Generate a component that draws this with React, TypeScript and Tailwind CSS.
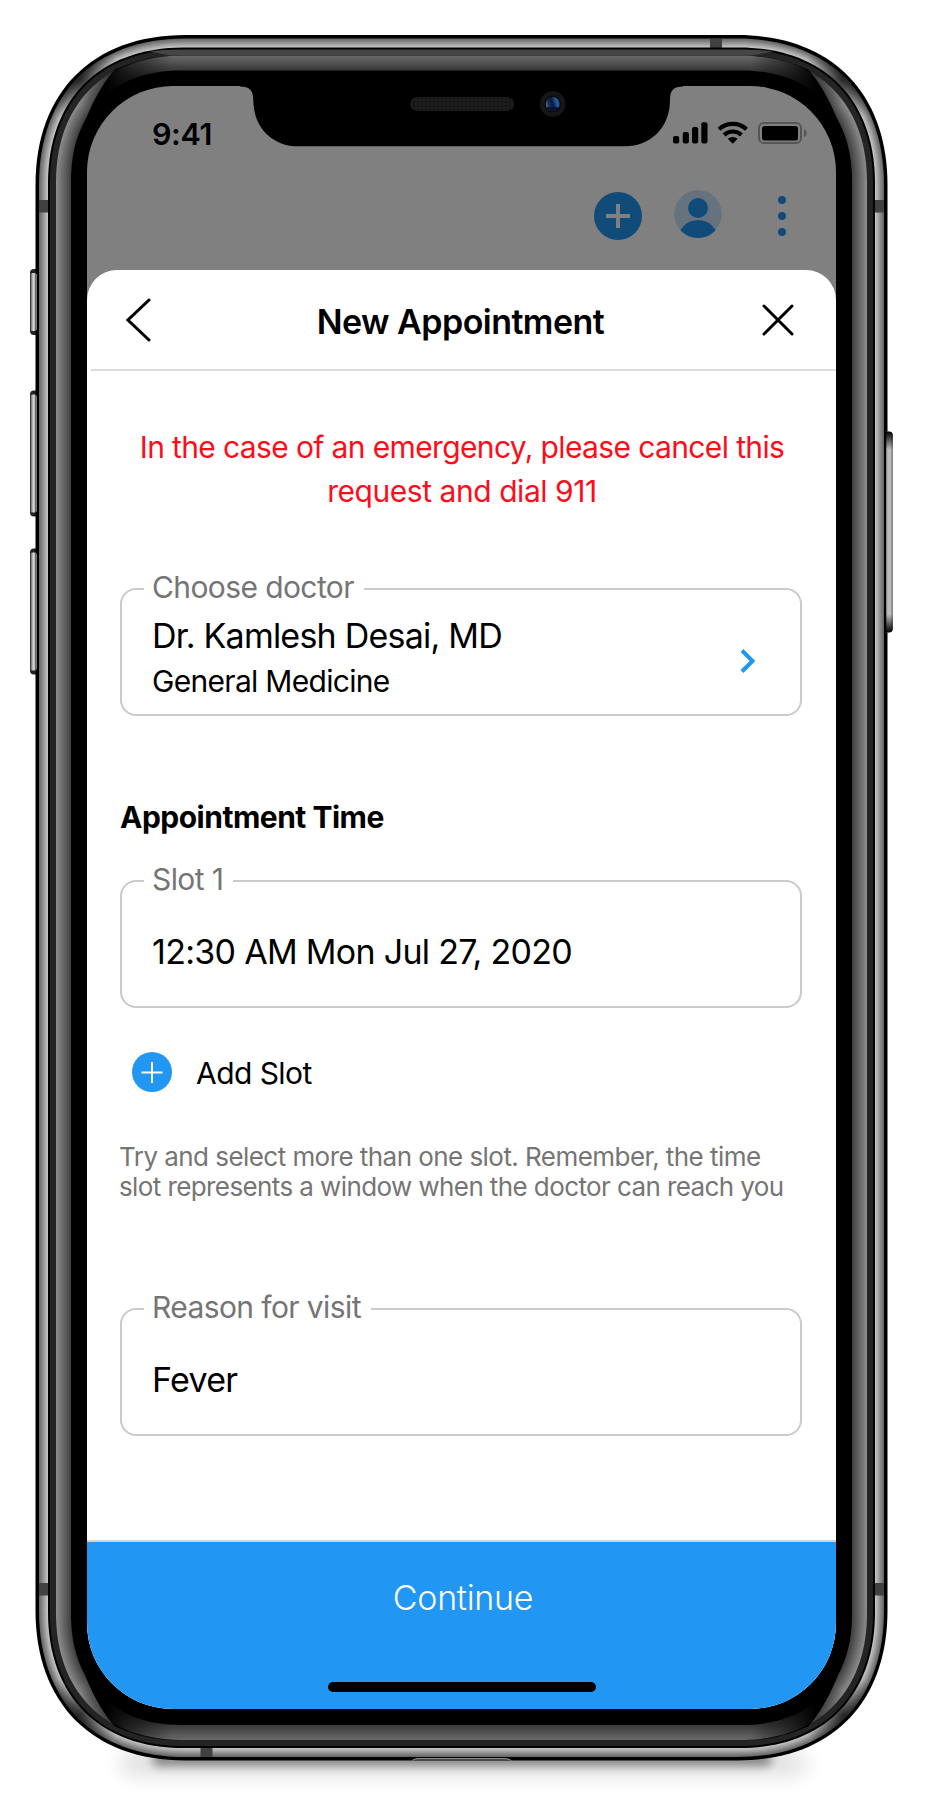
import React from "react";

const mix = (a: number, b: number, t: number) => Math.round(a + (b - a) * t);

function ring(d: number) {
  const l = 35.5 + d;
  const r = 887.5 - d;
  const t = 35 + d;
  const b = 1760.5 - d;
  const e = 150 - d * 1.13;
  const k = e * 0.38;
  return `M${l} ${t + e}C${l} ${t + k} ${l + k} ${t} ${l + e} ${t}H${r - e}C${r - k} ${t} ${r} ${t + k} ${r} ${t + e}V${b - e}C${r} ${b - k} ${r - k} ${b} ${r - e} ${b}H${l + e}C${l + k} ${b} ${l} ${b - k} ${l} ${b - e}Z`;
}

function Bands({ from, count, start, end }: { from: number; count: number; start: number; end: number }) {
  return (
    <>
      {Array.from({ length: count }, (_, i) => {
        const v = mix(start, end, i / (count - 1));
        return <path key={i} d={ring(from + i)} fill={`rgb(${v},${v},${v})`} />;
      })}
    </>
  );
}

const glass =
  "M71.5 185C71.5 140 97 88 115 69.500C145 57 160 55.500 185 55.500H738C763 55.500 778 57 808 69.500C826 88 851.500 140 851.500 185V1611C851.500 1656 826 1708 808 1726.500C778 1739 763 1740 738 1740H185C160 1740 145 1739 115 1726.500C97 1708 71.500 1656 71.500 1611Z";

function Frame() {
  return (
    <svg className="absolute inset-0" width="930" height="1796" viewBox="0 0 930 1796">
      <defs>
        <filter id="soft" x="-10%" y="-200%" width="120%" height="500%">
          <feGaussianBlur stdDeviation="10" />
        </filter>
        <filter id="tight" x="-10%" y="-300%" width="120%" height="700%">
          <feGaussianBlur stdDeviation="5" />
        </filter>
        <linearGradient id="fade">
          <stop offset="0.115" stopColor="#000" />
          <stop offset="0.185" stopColor="#fff" />
          <stop offset="0.807" stopColor="#fff" />
          <stop offset="0.877" stopColor="#000" />
        </linearGradient>
        <mask id="ends" maskUnits="userSpaceOnUse" x="0" y="0" width="930" height="1796">
          <rect width="930" height="1796" fill="url(#fade)" />
        </mask>
        <clipPath id="glass"><path d={glass} /></clipPath>
        <clipPath id="rim"><path d={ring(3.5)} /></clipPath>
        <clipPath id="inner"><path d={ring(20.5)} /></clipPath>
        <linearGradient id="key">
          <stop offset="0" stopColor="#555" />
          <stop offset="0.4" stopColor="#d8d8d8" />
          <stop offset="0.75" stopColor="#a8a8a8" />
          <stop offset="1" stopColor="#333" />
        </linearGradient>
        <linearGradient id="power">
          <stop offset="0.45" stopColor="#666" />
          <stop offset="0.6" stopColor="#bbb" />
          <stop offset="0.85" stopColor="#bbb" />
          <stop offset="1" stopColor="#555" />
        </linearGradient>
        <linearGradient id="caps" x1="0" y1="0" x2="0" y2="1">
          <stop offset="0" stopColor="#000" />
          <stop offset="0.09" stopColor="#000" stopOpacity="0" />
          <stop offset="0.91" stopColor="#000" stopOpacity="0" />
          <stop offset="1" stopColor="#000" />
        </linearGradient>
        <radialGradient id="shade">
          <stop offset="0" stopColor="#000" stopOpacity="0.7" />
          <stop offset="1" stopColor="#000" stopOpacity="0" />
        </radialGradient>
      </defs>

      <rect x="120" y="1750" width="686" height="26" rx="13" fill="#000" opacity="0.12" filter="url(#soft)" />
      <rect x="152" y="1753" width="620" height="13" rx="6.500" fill="#000" opacity="0.42" filter="url(#tight)" />

      {[[269, 66], [390.5, 126], [548.5, 126]].map(([y, h]) => (
        <g key={y}>
          <rect x="30" y={y} width="12" height={h} rx="4" fill="#222" />
          <rect x="30.500" y={y + 4} width="7" height={h - 8} rx="1.500" fill="url(#key)" />
        </g>
      ))}
      <path d={ring(0)} fill="#000" />
      <rect x="880" y="431.500" width="12.800" height="201" rx="4" fill="url(#power)" />
      <rect x="880" y="431.500" width="12.800" height="201" rx="4" fill="url(#caps)" />
      <rect x="884" y="431.500" width="2" height="201" fill="#000" />
      {[[269, 66], [390.5, 126], [548.5, 126]].map(([y, h]) => (
        <rect key={y} x="35.500" y={y + 5} width="1.500" height={h - 10} fill="#777" />
      ))}

      <Bands from={3.5} count={9} start={105} end={194} />
      <g clipPath="url(#rim)">
        <circle cx="80" cy="80" r="42" fill="url(#shade)" />
        <circle cx="843" cy="80" r="42" fill="url(#shade)" />
        <circle cx="80" cy="1715" r="42" fill="url(#shade)" />
        <circle cx="843" cy="1715" r="42" fill="url(#shade)" />
      </g>
      <g fill="#414141">
        <rect x="39" y="200" width="9" height="12.500" />
        <rect x="875" y="200" width="9" height="12.500" />
        <rect x="39" y="1583" width="9" height="12.500" />
        <rect x="875" y="1583" width="9" height="12.500" />
        <rect x="710" y="39" width="12" height="9" />
        <rect x="200.500" y="1748" width="12" height="9" />
      </g>
      <path d="M412 1760.500C415 1758.500 417 1758 420 1758H503C506 1758 508 1758.500 511.500 1760.500Z" fill="#4a4848" />
      <path d="M412 1760.500C415 1758.700 417 1758.500 420 1758.500H503C506 1758.500 508 1758.700 511.500 1760.500" fill="none" stroke="#8a8888" />
      <path d={ring(12.5)} fill="#000" />
      <path d={ring(14.5)} fill="#242424" />
      <path d="M150 51.500C160 50 170 49.800 180 49.800H743C753 49.800 763 50 773 51.500L750 56H173Z" fill="#454545" />
      <Bands from={20.5} count={15} start={138} end={66} />
      <g clipPath="url(#inner)">
        <circle cx="112" cy="68" r="48" fill="url(#shade)" />
        <circle cx="811" cy="68" r="48" fill="url(#shade)" />
        <circle cx="112" cy="1728" r="48" fill="url(#shade)" />
        <circle cx="811" cy="1728" r="48" fill="url(#shade)" />
      </g>
      <path d={glass} fill="#000" />
      <g clipPath="url(#glass)" mask="url(#ends)">
        <Bands from={20.5} count={15} start={104} end={58} />
      </g>
      <path d={ring(35.5)} fill="#000" />
    </svg>
  );
}

function Notch() {
  return (
    <svg className="absolute left-[240px] top-[80px]" width="446" height="70" viewBox="240 80 446 70">
      <defs>
        <pattern id="grille" width="4" height="4" patternUnits="userSpaceOnUse">
          <rect width="4" height="4" fill="#1c1c1c" />
          <circle cx="2" cy="2" r="1.200" fill="#121212" />
        </pattern>
        <linearGradient id="lens" x1="0" y1="0.6" x2="1" y2="0.3">
          <stop offset="0" stopColor="#4b7296" />
          <stop offset="0.25" stopColor="#142d55" />
          <stop offset="0.5" stopColor="#0a1840" />
          <stop offset="0.75" stopColor="#1f5c9c" />
          <stop offset="1" stopColor="#1c4f88" />
        </linearGradient>
      </defs>
      <path d="M240 80V86.600C249 86.600 253.300 90 253.300 100C253.300 128 273 146.300 298 146.300H625C650 146.300 670 128 670 100C670 90 674 86.600 683 86.600V80Z" fill="#000" />
      <rect x="410" y="97" width="104" height="14" rx="7" fill="url(#grille)" />
      <circle cx="552.700" cy="104" r="12.800" fill="#161616" />
      <circle cx="552.700" cy="104" r="8.500" fill="#0b0b0b" />
      <circle cx="552.700" cy="104" r="7" fill="url(#lens)" />
      <path d="M546.500 107A7 7 0 0 0 559 107Z" fill="#0a1533" />
    </svg>
  );
}

function StatusBar() {
  return (
    <div className="flex h-[90px] items-start justify-between pl-[65px] pr-[29px] pt-[34px]">
      <span className="text-[30.5px] font-semibold leading-[28px] tracking-[-0.4px]">9:41</span>
      <svg width="135" height="26" viewBox="672 119 135 26">
        <rect x="673" y="135" width="6.200" height="7.500" rx="2" />
        <rect x="682.700" y="131" width="6.200" height="11.500" rx="2" />
        <rect x="692" y="126" width="6.200" height="16.500" rx="2" />
        <rect x="701.300" y="121.300" width="6.200" height="21.200" rx="2" />
        <g fill="none" stroke="#000" strokeWidth="4.200">
          <path d="M719 128.300A20.300 20.300 0 0 1 746.500 128.300" />
          <path d="M724 133.800A13.300 13.300 0 0 1 741.500 133.800" />
        </g>
        <path d="M727.700 137.800A7.800 7.800 0 0 1 737.700 137.800L732.700 142.700Z" />
        <rect x="759" y="122" width="42" height="20" rx="5" fill="none" stroke="#555" strokeWidth="2" />
        <rect x="762" y="125" width="36" height="14.500" rx="2.500" />
        <path d="M804 128.300C807.500 129.500 807.500 134.500 804 136Z" fill="#555" />
      </svg>
    </div>
  );
}

function Toolbar() {
  return (
    <div className="flex h-[94px] items-start justify-end gap-8 pr-[50px] pt-[14px]">
      <svg className="mt-[2px]" width="48" height="48" viewBox="0 0 48 48">
        <circle cx="24" cy="24" r="24" fill="#114b7a" />
        <path d="M24 12v24M12 24h24" stroke="#808080" strokeWidth="4" />
      </svg>
      <svg width="48" height="48" viewBox="0 0 48 48">
        <clipPath id="avatar"><circle cx="24" cy="24" r="24" /></clipPath>
        <g clipPath="url(#avatar)" fill="#114b7a">
          <circle cx="24" cy="24" r="24" fill="#66737e" />
          <circle cx="24" cy="18" r="10" />
          <circle cx="24" cy="50" r="20" />
        </g>
      </svg>
      <svg className="ml-[24px] mt-[6px]" width="8" height="40" viewBox="0 0 8 40" fill="#114b7a">
        <circle cx="4" cy="4" r="4" />
        <circle cx="4" cy="20" r="4" />
        <circle cx="4" cy="36" r="4" />
      </svg>
    </div>
  );
}

function Field({ label, className, children }: { label: string; className: string; children: React.ReactNode }) {
  return (
    <div className={`relative h-[128px] w-[682px] shrink-0 rounded-[16px] border-2 border-[#cacaca] pl-[30px] ${className}`}>
      <span className="absolute left-[22px] top-[-21px] bg-white pl-[8px] pr-[10px] text-[30px] leading-[36px] tracking-[-0.6px] text-[#757575]">{label}</span>
      {children}
    </div>
  );
}

export default function App() {
  return (
    <div className="relative h-[1796px] w-[930px] overflow-hidden bg-white font-['Inter',sans-serif] text-black">
      <Frame />
      <div className="relative ml-[87px] pt-[86px]">
        <div className="flex h-[1623px] w-[749px] flex-col overflow-hidden rounded-[86px] bg-[#808080]">
          <StatusBar />
          <Toolbar />
          <main className="flex flex-1 flex-col rounded-t-[30px] bg-white">
            <header className="ml-[4px] flex h-[101px] shrink-0 items-center justify-between border-b-2 border-[#dcdcdc] pl-[35px] pr-[42px]">
              <svg width="26" height="44" viewBox="0 0 26 44" fill="none" stroke="#000" strokeWidth="3" strokeLinecap="round">
                <path d="M23 2L2 22L23 42" />
              </svg>
              <h1 className="ml-[7px] mt-[5px] text-[34px] font-semibold leading-[40px] tracking-[-0.55px]">New Appointment</h1>
              <svg width="32" height="32" viewBox="0 0 32 32" fill="none" stroke="#000" strokeWidth="3" strokeLinecap="round">
                <path d="M2 2L30 30M30 2L2 30" />
              </svg>
            </header>
            <p className="mt-[54px] pl-px text-center text-[30px] leading-[44px] tracking-[-0.63px] text-[#fc0d1b]">
              In the case of an emergency, please cancel this<br /><span className="tracking-[-0.45px]">request and dial 911</span>
            </p>
            <Field label="Choose doctor" className="ml-[33px] mt-[75px] flex items-start justify-between pr-[44px]">
              <div className="pt-[23px]">
                <div className="text-[34px] leading-[46px] tracking-[-0.77px]">Dr. Kamlesh Desai, MD</div>
                <div className="text-[30px] leading-[44px] tracking-[-0.7px]">General Medicine</div>
              </div>
              <svg className="mt-[59px]" width="16" height="24" viewBox="0 0 16 24" fill="none" stroke="#2196f3" strokeWidth="4">
                <path d="M2 1.500L12.500 12L2 22.500" />
              </svg>
            </Field>
            <h2 className="ml-[33px] mt-[83px] text-[30px] font-bold leading-[36px] tracking-[-0.5px]">Appointment Time</h2>
            <Field label="Slot 1" className="ml-[33px] mt-[45px] pt-[48px]">
              <div className="text-[34px] leading-[44px] tracking-[-0.7px]">12:30 AM Mon Jul 27, 2020</div>
            </Field>
            <div className="ml-[45px] mt-[44px] flex h-[40px] items-center gap-[24px]">
              <svg width="40" height="40" viewBox="0 0 40 40">
                <circle cx="20" cy="20" r="20" fill="#2196f3" />
                <path d="M20 10v21M9.500 20.500h21" stroke="#fff" strokeWidth="2" />
              </svg>
              <span className="mt-px text-[30px] leading-[36px] tracking-[-0.55px]">Add Slot</span>
            </div>
            <p className="ml-[32px] mt-[50px] text-[26px] leading-[30px] tracking-[-0.6px] text-[#757575]">
              <span className="tracking-[-0.55px]">Try and select more than one slot. Remember, the time</span><br />slot represents a window when the doctor can reach you
            </p>
            <Field label="Reason for visit" className="ml-[33px] mt-[106px] pt-[48px]">
              <div className="text-[34px] leading-[44px] tracking-[-0.7px]">Fever</div>
            </Field>
            <footer className="mt-auto flex h-[169px] flex-col items-center border-t-2 border-[#d4d4d4] bg-[#2196f3] pt-[34px]">
              <button className="pl-[3px] text-[34px] font-light leading-[44px] tracking-[-0.3px] text-white">Continue</button>
              <div className="mt-[62px] h-[10px] w-[268px] rounded-full bg-black" />
            </footer>
          </main>
        </div>
      </div>
      <Notch />
    </div>
  );
}
